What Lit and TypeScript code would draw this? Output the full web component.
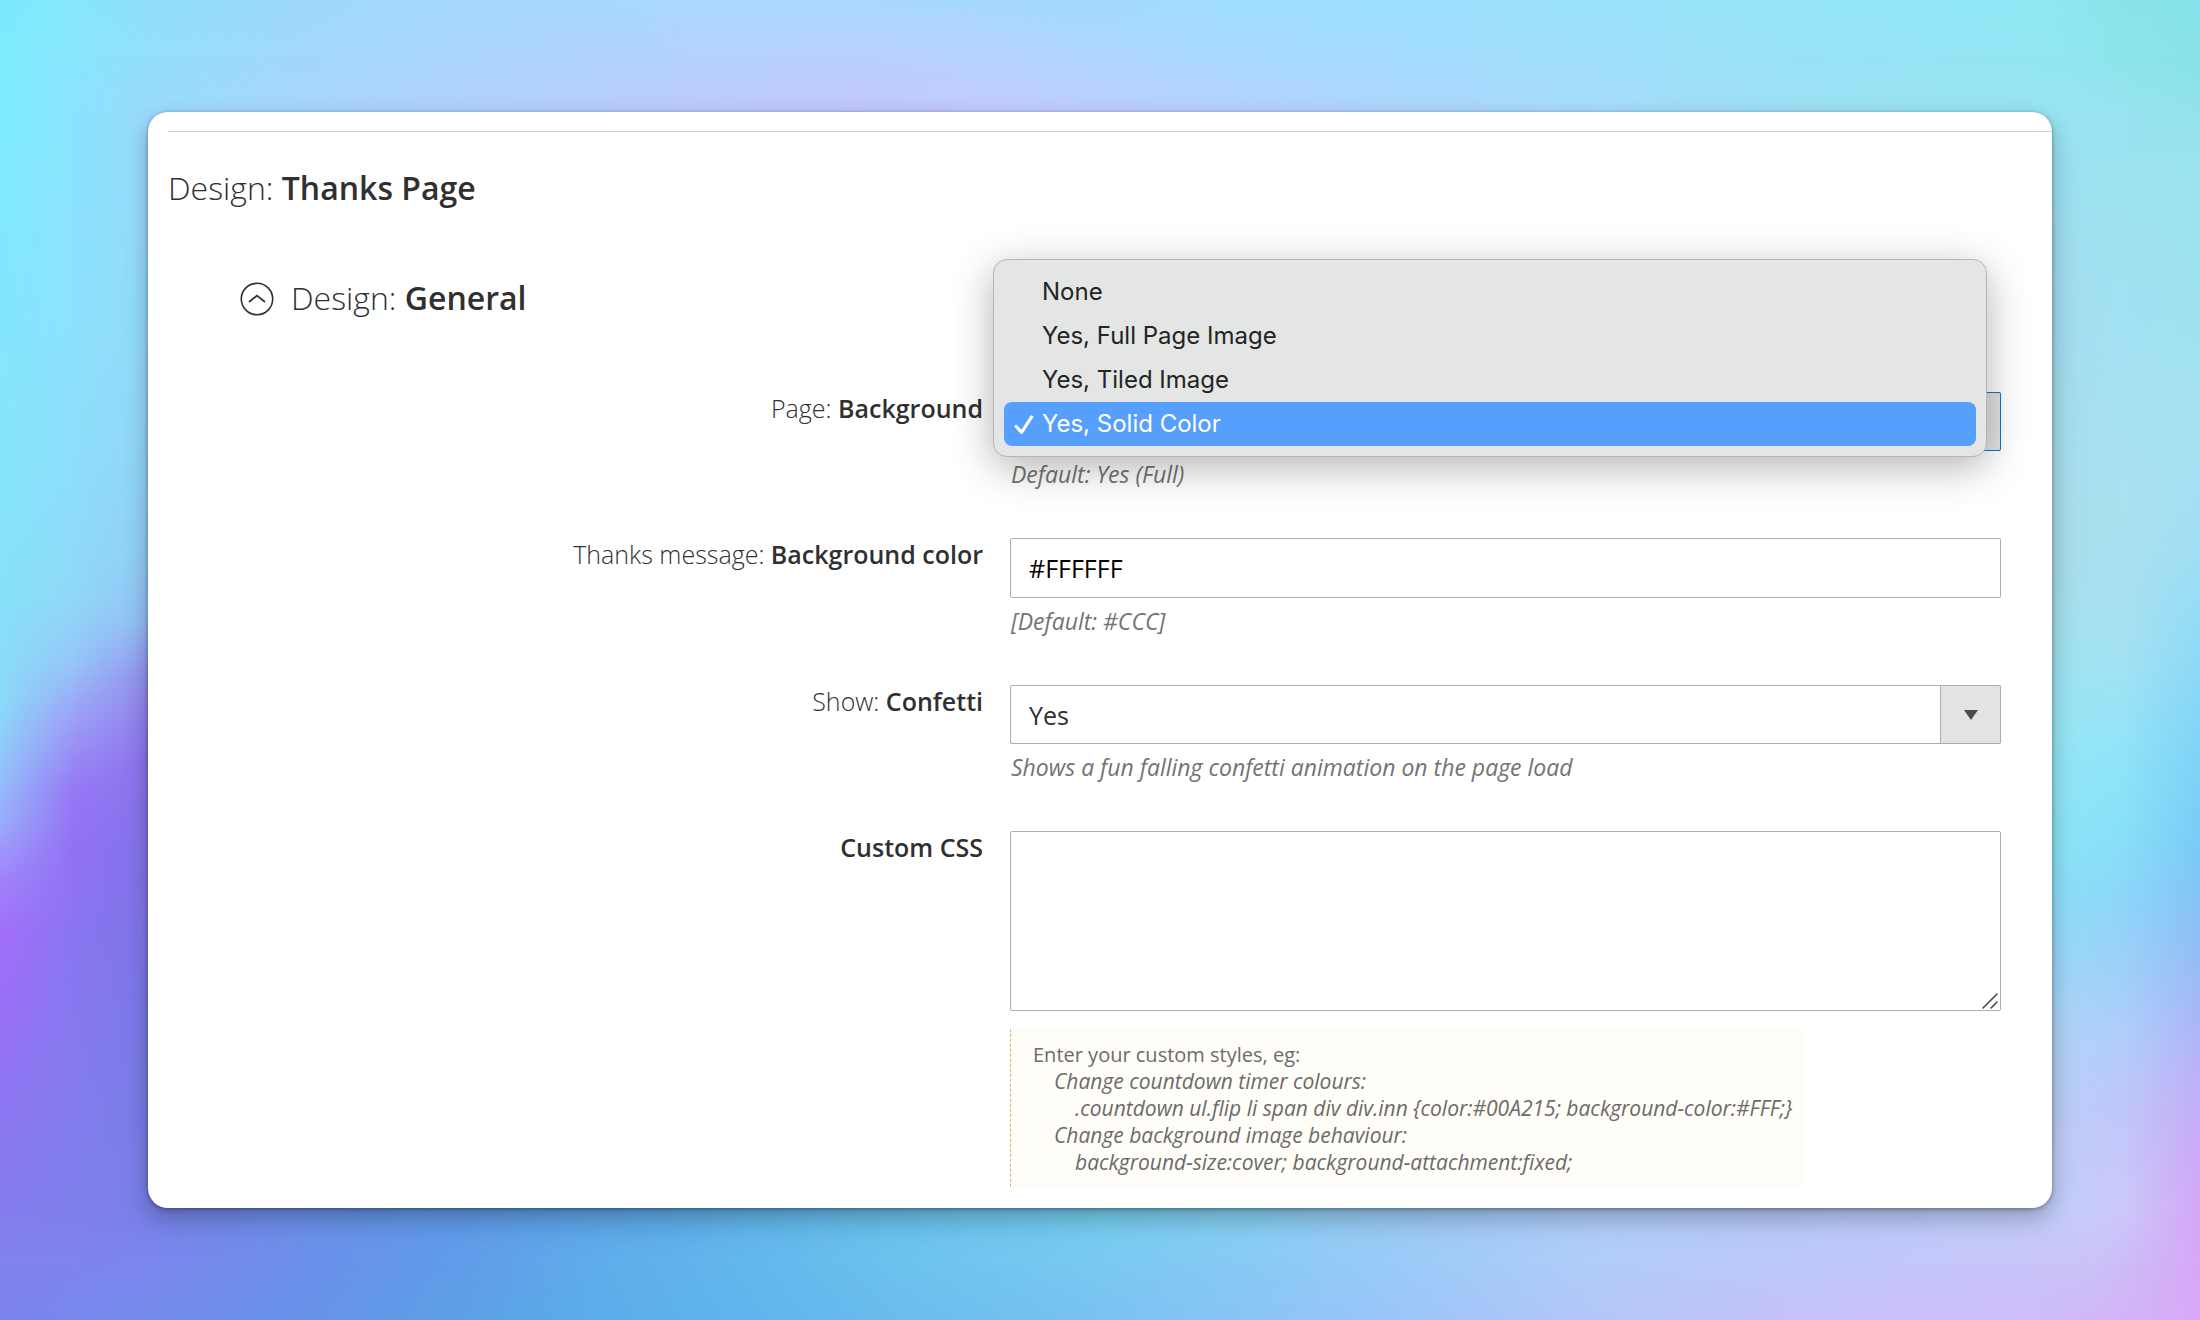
import { LitElement, html, css } from "lit";
import { customElement, state } from "lit/decorators.js";
import { styleMap } from "lit/directives/style-map.js";

const OPTIONS = ["None", "Yes, Full Page Image", "Yes, Tiled Image", "Yes, Solid Color"];

type Stop = [number, string];

// Colour profiles of the wallpaper: each band holds several gradients that blend
// into one another across the band. Stops are measured along a 2200 x 1320 canvas.
const TOP: Stop[][] = [
  [[0, "#7de8fd"], [50, "#82e9fe"], [148, "#90dffc"], [300, "#9dd9fc"], [450, "#a6d8fd"], [700, "#a9d8fe"], [900, "#a8d8fe"], [1100, "#a2dafd"], [1300, "#9edffe"], [1500, "#9be0fc"], [1700, "#97e4f8"], [1900, "#92e6f5"], [2052, "#8ee8f4"], [2120, "#8ae4ea"], [2200, "#86e3ea"]],
  [[0, "#7debfe"], [148, "#93dffd"], [300, "#a3d7fd"], [500, "#acd4fd"], [700, "#b4d1fe"], [850, "#b9cffd"], [1000, "#b5d2fe"], [1200, "#a9d8fe"], [1400, "#a3dbfd"], [1600, "#a0dffa"], [1800, "#98e2f6"], [2052, "#92e5f3"], [2130, "#8ce4ea"], [2200, "#88e3e8"]],
  [[0, "#7debff"], [74, "#8ae3fe"], [148, "#9adafc"], [300, "#a8d5fd"], [500, "#b3cffd"], [700, "#bdcafd"], [850, "#c3c8fc"], [1000, "#c1cbfd"], [1200, "#b8d0fd"], [1400, "#b0d6fe"], [1600, "#a6dcfb"], [1800, "#9edff4"], [1950, "#98e3f2"], [2052, "#98e4f3"], [2126, "#96e3f0"], [2200, "#92e2ea"]],
];
const BOTTOM: Stop[][] = [
  [[0, "#857cee"], [74, "#807eec"], [148, "#7880e8"], [300, "#6a90e6"], [450, "#5f98e6"], [650, "#5ca8e6"], [850, "#66bcea"], [1100, "#74cdee"], [1250, "#86cff0"], [1400, "#9cc8f4"], [1600, "#aecbf8"], [1800, "#b6c8f8"], [2052, "#c2cefa"], [2126, "#ccc8fa"], [2160, "#d0b8f8"], [2200, "#d2a6f6"]],
  [[0, "#8182ee"], [150, "#7b86ec"], [300, "#6c8fea"], [450, "#619bea"], [600, "#5fadea"], [750, "#63b8ec"], [900, "#6cc2ee"], [1080, "#78c9f1"], [1250, "#88caf4"], [1400, "#9acbf8"], [1600, "#b2cdfa"], [1800, "#bdc8fa"], [1950, "#c5c6f9"], [2100, "#cbc2f8"], [2160, "#d0b2f7"], [2200, "#d8a6f8"]],
  [[0, "#7a84ea"], [148, "#748cec"], [300, "#6892e8"], [450, "#5d9fe6"], [600, "#5aade9"], [750, "#60b5ec"], [900, "#6abcee"], [1050, "#74c0f0"], [1200, "#84c4f5"], [1400, "#9cc4f8"], [1600, "#b4c6f8"], [1750, "#c2c2f9"], [1900, "#ccc0fa"], [2052, "#cfbcf8"], [2150, "#d4b0f7"], [2200, "#d8a8f8"]],
];
const LEFT: Stop[][] = [
  [[112, "#7debff"], [300, "#83e7fe"], [420, "#86e6fd"], [560, "#86e3fb"], [700, "#8bdcf8"], [760, "#92c8f8"], [820, "#9aaefa"], [880, "#a084fb"], [930, "#a26ff9"], [1000, "#9c6ff6"], [1080, "#9174f2"], [1150, "#8879f0"], [1208, "#857cee"]],
  [[112, "#8ae3fe"], [300, "#8de2fe"], [500, "#8eddfb"], [600, "#90d8f8"], [660, "#96c6f7"], [720, "#9c9ff7"], [790, "#9678f5"], [850, "#9270f3"], [950, "#8776ef"], [1100, "#837cee"], [1208, "#807eec"]],
  [[112, "#9adafc"], [300, "#94dbfa"], [450, "#92d5f8"], [560, "#92cdf6"], [620, "#94bdf4"], [680, "#938eee"], [760, "#8d73ec"], [850, "#8274ea"], [1000, "#7c78e8"], [1208, "#7880e8"]],
];
const RIGHT: Stop[][] = [
  [[112, "#98e4f3"], [250, "#a0def0"], [400, "#a6dcee"], [560, "#a8dcea"], [640, "#a2e2f0"], [720, "#98e6f4"], [850, "#8be5f8"], [900, "#8edff8"], [960, "#9cd9f8"], [1040, "#b0d3f8"], [1120, "#bccdf8"], [1208, "#c2cefa"]],
  [[112, "#96e3f0"], [200, "#9ee1f0"], [350, "#a3e1f3"], [500, "#a9e1ef"], [580, "#a8e0f0"], [650, "#a4e1f2"], [740, "#92e3f8"], [820, "#88e1f8"], [900, "#8cd5f9"], [960, "#9cd0f9"], [1040, "#b2cdfb"], [1120, "#c2c6fa"], [1208, "#ccc8fa"]],
  [[112, "#92e2ea"], [180, "#9ce2f0"], [300, "#9fe1f0"], [450, "#a5e0f2"], [550, "#a0def4"], [650, "#8fdaf6"], [750, "#80d2f6"], [850, "#79caf6"], [930, "#8dbff4"], [1000, "#a2b8f6"], [1080, "#bcb0f6"], [1160, "#cca8f6"], [1208, "#d2a6f6"]],
];
const MIDDLE: Stop[][] = [LEFT[2], RIGHT[0]];

@customElement("app-backdrop")
class AppBackdrop extends LitElement {
  static styles = css`
    :host {
      position: absolute;
      inset: 0;
      z-index: -1;
      display: grid;
      grid-template: 112px 1fr 112px / 148px 1fr 148px;
    }
    .band { display: grid; }
    .wide { grid-column: 1 / -1; }
    .layer { grid-area: 1 / 1; }
  `;

  private band(profiles: Stop[][], along: string, across: string, name = "") {
    const step = 100 / (profiles.length - 1);
    return html`<div class="band ${name}">${profiles.map((stops, i) => {
      const start = stops[0][0];
      const span = stops[stops.length - 1][0] - start;
      const fade = i === 0 ? "none" : `linear-gradient(${across}, transparent ${(i - 1) * step}%, #000 ${i * step}%)`;
      return html`<div class="layer" style=${styleMap({
        background: `linear-gradient(${along}, ${stops.map(([at, c]) => `${c} ${((at - start) / span) * 100}%`).join(", ")})`,
        maskImage: fade,
      })}></div>`;
    })}</div>`;
  }

  render() {
    return html`
      ${this.band(TOP, "to right", "to bottom", "wide")}
      ${this.band(LEFT, "to bottom", "to right")}
      ${this.band(MIDDLE, "to bottom", "to right")}
      ${this.band(RIGHT, "to bottom", "to right")}
      ${this.band(BOTTOM, "to right", "to bottom", "wide")}
    `;
  }
}

@customElement("app-root")
class AppRoot extends LitElement {
  static styles = css`
    :host {
      display: block;
      position: relative;
      z-index: 0;
      box-sizing: border-box;
      min-height: 100vh;
      padding: 112px 148px;
      font-family: "Open Sans", "Noto Sans", sans-serif;
      color: #303030;
    }
    * { box-sizing: border-box; }
    .card {
      display: flow-root;
      background: #fff;
      border-radius: 20px;
      padding: 19px 0 20px 20px;
      box-shadow: 0 1px 4px rgba(0, 0, 0, 0.35), 0 10px 24px rgba(0, 0, 0, 0.26);
    }
    .section { border-top: 1px solid #ccc; padding-top: 34px; }
    h1, h2 { margin: 0; font-size: 32px; line-height: 44px; font-weight: 300; }
    b { font-weight: 600; }
    .group { display: flex; align-items: center; gap: 17px; margin: 66px 0 72px 72px; }
    .toggle { display: flex; padding: 0; border: 0; background: none; color: inherit; }
    .fields { display: grid; gap: 44px; padding-right: 51px; }
    .row { display: grid; grid-template-columns: 815fr 991fr; column-gap: 27px; align-items: start; }
    .label { text-align: right; font-size: 25px; line-height: 32px; font-weight: 300; white-space: nowrap; }
    .box {
      display: block;
      width: 100%;
      height: 60px;
      margin: 0;
      padding: 0 18px;
      border: 1px solid #adadad;
      border-radius: 2px;
      background: #fff;
      font: 400 25px/34px "Open Sans", "Noto Sans", sans-serif;
      color: #000;
      outline: none;
    }
    .pick { display: grid; grid-template-columns: 1fr 61px; }
    .pick select { grid-area: 1 / 1 / 2 / 3; height: 59px; appearance: none; color: #303030; }
    .arrow {
      grid-area: 1 / 2;
      display: grid;
      place-items: center;
      border: 1px solid #adadad;
      border-radius: 0 2px 2px 0;
      background: #e3e3e3;
      pointer-events: none;
      z-index: 1;
    }
    .open select, .open .arrow { border-color: #007bdb; }
    .hint { margin: 0; padding: 3px 1px 0; font-size: 23px; line-height: 40px; font-style: italic; color: #737373; }
    textarea.box { height: 180px; padding: 12px 18px; resize: none; }
    .grip { position: absolute; right: 2px; bottom: 1px; display: block; }
    .area { position: relative; }
    .note {
      width: 80%;
      margin-top: 17px;
      padding: 13px 20px 12px 22px;
      border-left: 1px dashed #d0b96c;
      border-radius: 3px;
      background: #fffdf7;
      font-size: 20px;
      line-height: 27px;
      color: #6b6b6b;
      white-space: nowrap;
    }
    .note p { margin: 0; }
    .note .in1, .note .in2 { font-size: 21px; font-style: italic; }
    .note .in1 { padding-left: 21px; }
    .note .in2 { padding-left: 42px; }
    .menu {
      position: absolute;
      left: -17px;
      right: 14px;
      bottom: -6px;
      z-index: 2;
      margin: 0;
      padding: 10px;
      border: 1px solid #b4b5b4;
      border-radius: 14px;
      background: #e4e6e5;
      box-shadow: 0 10px 40px rgba(0, 0, 0, 0.3);
      font: 400 24px/44px Inter, "Liberation Sans", sans-serif;
      color: #232424;
    }
    .item {
      display: flex;
      align-items: center;
      width: 100%;
      height: 44px;
      padding: 0 0 0 10px;
      border: 0;
      border-radius: 8px;
      background: none;
      font: inherit;
      color: inherit;
      text-align: left;
    }
    .tick { display: grid; align-items: center; width: 28px; flex: none; }
    .item.on { background: #579fff; color: #fff; }
  `;

  @state() private chosen = 3;

  private arrow() {
    return html`<span class="arrow"><svg width="14" height="10" aria-hidden="true"><path d="M0 0H14L7 10Z" fill="#514943"></path></svg></span>`;
  }

  render() {
    return html`
      <app-backdrop></app-backdrop>
      <main class="card">
        <section class="section">
          <h1>Design: <b>Thanks Page</b></h1>
          <div class="group">
            <button class="toggle" aria-label="Collapse section">
              <svg width="34" height="36" viewBox="0 -2 34 36" fill="none" stroke="#303030" stroke-width="1.6" aria-hidden="true">
                <circle cx="17" cy="17" r="15.7"></circle>
                <path d="M9 20L17 13.6L25 20" stroke-width="1.8"></path>
              </svg>
            </button>
            <h2>Design: <b>General</b></h2>
          </div>
          <div class="fields">
            <div class="row">
              <label class="label" for="bg">Page: <b>Background</b></label>
              <div class="control">
                <div class="area">
                  <div class="pick open">
                    <select class="box" id="bg">
                      ${OPTIONS.map((o, i) => html`<option ?selected=${i === this.chosen}>${o}</option>`)}
                    </select>
                    ${this.arrow()}
                  </div>
                  <div class="menu" role="listbox" aria-label="Page: Background">
                    ${OPTIONS.map((o, i) => html`
                      <button class="item ${i === this.chosen ? "on" : ""}" role="option"
                        aria-selected=${i === this.chosen} @click=${() => (this.chosen = i)}>
                        <span class="tick">${i === this.chosen
                          ? html`<svg width="20" height="22" viewBox="0 0 20 22" fill="none" stroke="#fff" stroke-width="3.2" stroke-linecap="round" stroke-linejoin="round" aria-hidden="true"><path d="M2.2 13.5L7.6 19.4L17.6 4"></path></svg>`
                          : ""}</span>${o}
                      </button>`)}
                  </div>
                </div>
                <p class="hint">Default: Yes (Full)</p>
              </div>
            </div>
            <div class="row">
              <label class="label" for="color">Thanks message: <b>Background color</b></label>
              <div class="control">
                <input class="box" id="color" type="text" value="#FFFFFF">
                <p class="hint">[Default: #CCC]</p>
              </div>
            </div>
            <div class="row">
              <label class="label" for="confetti">Show: <b>Confetti</b></label>
              <div class="control">
                <div class="pick">
                  <select class="box" id="confetti"><option>Yes</option><option>No</option></select>
                  ${this.arrow()}
                </div>
                <p class="hint">Shows a fun falling confetti animation on the page load</p>
              </div>
            </div>
            <div class="row">
              <label class="label" for="styles"><b>Custom CSS</b></label>
              <div class="control">
                <div class="area">
                  <textarea class="box" id="styles"></textarea>
                  <svg class="grip" width="18" height="18" viewBox="0 0 18 18" fill="none" stroke="#4a4a4a" stroke-width="1.6" stroke-linecap="round" aria-hidden="true"><path d="M2 16L16 2M10 16L16 10"></path></svg>
                </div>
                <div class="note">
                  <p>Enter your custom styles, eg:</p>
                  <p class="in1">Change countdown timer colours:</p>
                  <p class="in2">.countdown ul.flip li span div div.inn {color:#00A215; background-color:#FFF;}</p>
                  <p class="in1">Change background image behaviour:</p>
                  <p class="in2">background-size:cover; background-attachment:fixed;</p>
                </div>
              </div>
            </div>
          </div>
        </section>
      </main>
    `;
  }
}
